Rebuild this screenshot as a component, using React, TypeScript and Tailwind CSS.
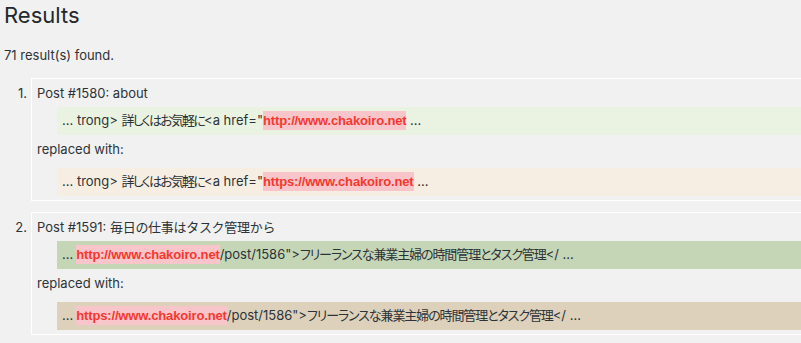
import React from "react";

const font = { fontFamily: 'Inter, "Noto Sans CJK JP", sans-serif' };

function Hl({ children }: { children: React.ReactNode }) {
  return (
    <span className="bg-[#f8c5cb] text-[#f5382e] font-bold py-[2px] tracking-[-0.15px] font-['Liberation_Sans',Arial,sans-serif]">
      {children}
    </span>
  );
}

function Snip({ bg, children }: { bg: string; children: React.ReactNode }) {
  return (
    <div
      className={`ml-[20px] h-[28px] flex items-center pl-[5px] whitespace-nowrap [font-feature-settings:'palt'] ${bg}`}
    >
      <span>{children}</span>
    </div>
  );
}

function Item({
  n,
  title,
  a,
  b,
  aBg,
  bBg,
}: {
  n: string;
  title: React.ReactNode;
  a: React.ReactNode;
  b: React.ReactNode;
  aBg: string;
  bBg: string;
}) {
  return (
    <div className="flex">
      <div className="w-[31px] shrink-0 text-right pr-[4px] pt-[5px] leading-[20px]">{n}</div>
      <div className="w-[900px] shrink-0 border border-white pt-[4px] pb-[4px] pl-[5px]">
        <div className="leading-[20px]">{title}</div>
        <div className="mt-[4px]">
          <Snip bg={aBg}>{a}</Snip>
        </div>
        <div className="mt-[4px] mb-[9px] leading-[20px]">replaced with:</div>
        <Snip bg={bBg}>{b}</Snip>
      </div>
    </div>
  );
}

const J1 = () => <span className="tracking-[-1.8px]">詳しくはお気軽に</span>;
const J2 = () => (
  <span className="tracking-[-1.1px]">フリーランスな兼業主婦の時間管理とタスク管理</span>
);

export default function App() {
  return (
    <div
      className="w-[801px] h-[343px] overflow-hidden bg-[#f1f1f1] text-[#2c3338] text-[13px]"
      style={font}
    >
      <h1 className="pl-[4px] text-[22px] leading-[30px] text-[#23282d]">Results</h1>
      <div className="pl-[4px] mt-[15px] leading-[20px]">71 result(s) found.</div>
      <div className="mt-[13px] flex flex-col gap-[11px]">
        <Item
          n="1."
          title="Post #1580: about"
          aBg="bg-[#eaf3e1]"
          bBg="bg-[#f6eee3]"
          a={
            <>
              ... trong&gt; <J1 />&lt;a href="<Hl>http://www.chakoiro.net</Hl> ...
            </>
          }
          b={
            <>
              ... trong&gt; <J1 />&lt;a href="<Hl>https://www.chakoiro.net</Hl> ...
            </>
          }
        />
        <Item
          n="2."
          title={
            <>
              Post #1591: <span className="tracking-[-0.3px]">毎日の仕事はタスク管理から</span>
            </>
          }
          aBg="bg-[#c5d6b6]"
          bBg="bg-[#ddd1bb]"
          a={
            <>
              ...<span className="ml-[3px]"><Hl>http://www.chakoiro.net</Hl></span>/post/1586"&gt;<J2 />&lt;/ ...
            </>
          }
          b={
            <>
              ...<span className="ml-[3px]"><Hl>https://www.chakoiro.net</Hl></span>/post/1586"&gt;<J2 />&lt;/ ...
            </>
          }
        />
      </div>
    </div>
  );
}
